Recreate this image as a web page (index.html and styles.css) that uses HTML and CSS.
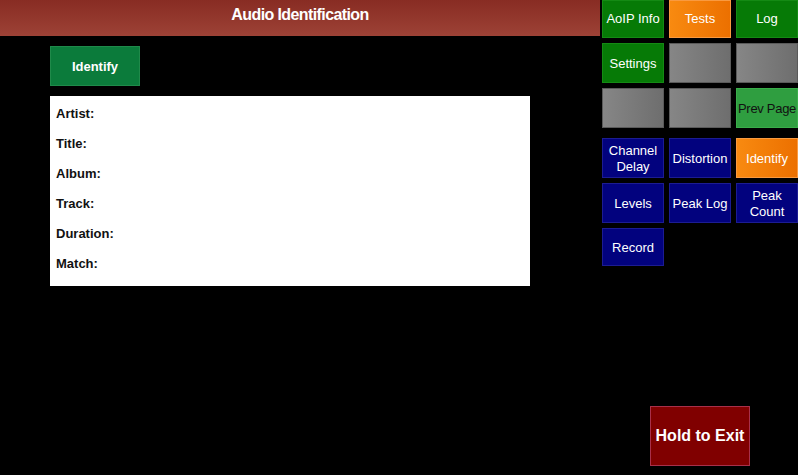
FILE: index.html
```html
<!DOCTYPE html>
<html>
<head>
<meta charset="utf-8">
<link rel="stylesheet" href="styles.css">
</head>
<body>
<div class="app">
  <div class="main">
    <div class="header">Audio Identification</div>
    <div class="identify-btn">Identify</div>
    <div class="panel">
      <div class="row">Artist:</div>
      <div class="row">Title:</div>
      <div class="row">Album:</div>
      <div class="row">Track:</div>
      <div class="row">Duration:</div>
      <div class="row">Match:</div>
    </div>
  </div>
  <div class="side">
    <div class="grid grid-top">
      <div class="btn green">AoIP Info</div>
      <div class="btn orange">Tests</div>
      <div class="btn green">Log</div>
      <div class="btn green">Settings</div>
      <div class="btn gray"></div>
      <div class="btn gray"></div>
      <div class="btn gray"></div>
      <div class="btn gray"></div>
      <div class="btn lightgreen">Prev Page</div>
    </div>
    <div class="grid grid-bottom">
      <div class="btn navy">Channel<br>Delay</div>
      <div class="btn navy">Distortion</div>
      <div class="btn orange">Identify</div>
      <div class="btn navy">Levels</div>
      <div class="btn navy">Peak Log</div>
      <div class="btn navy">Peak<br>Count</div>
      <div class="btn navy">Record</div>
    </div>
    <div class="exit">Hold to Exit</div>
  </div>
</div>
</body>
</html>
```
FILE: styles.css
```css
html, body {
  margin: 0;
  padding: 0;
  background: #000;
  font-family: "Liberation Sans", Arial, sans-serif;
}
.app {
  display: flex;
  width: 798px;
  height: 475px;
  overflow: hidden;
}
.main {
  width: 600px;
  display: flex;
  flex-direction: column;
}
.header {
  height: 36px;
  line-height: 30px;
  text-align: center;
  color: #fff;
  font-weight: bold;
  font-size: 16px;
  letter-spacing: -0.6px;
  background: linear-gradient(#882c23, #9d4236);
}
.identify-btn {
  margin: 10px 0 0 50px;
  width: 88px;
  height: 38px;
  border: 1px solid #1f8a4a;
  background: #0b7b3b;
  color: #fff;
  font-weight: bold;
  font-size: 13px;
  display: flex;
  align-items: center;
  justify-content: center;
}
.panel {
  margin: 10px 0 0 50px;
  width: 474px;
  height: 187px;
  padding: 3px 0 0 6px;
  background: #fff;
}
.row {
  height: 30px;
  line-height: 30px;
  font-weight: bold;
  font-size: 13px;
  color: #111;
}
.side {
  width: 196px;
  padding-left: 2px;
  display: flex;
  flex-direction: column;
}
.grid {
  display: grid;
  grid-template-columns: 62px 62px 62px;
  column-gap: 5px;
  row-gap: 5px;
}
.grid-top {
  grid-template-rows: 38px 40px 40px;
}
.grid-bottom {
  margin-top: 10px;
  grid-template-rows: 40px 40px 38px;
}
.btn {
  box-sizing: border-box;
  display: flex;
  align-items: center;
  justify-content: center;
  text-align: center;
  font-size: 13px;
  line-height: 16px;
  padding-top: 2px;
  color: #fff;
  white-space: nowrap;
}
.grid-top .btn:nth-child(-n+3) {
  padding-top: 0;
}
.green {
  background: #067a06;
  border: 1px solid #148a14;
}
.orange {
  background: linear-gradient(90deg, #f88a10, #ec7000);
  border: 1px solid #f99a40;
}
.gray {
  background: linear-gradient(90deg, #868686, #6e6e6e);
  border: 1px solid #5a5a5a;
}
.lightgreen {
  background: #2f9e40;
  border: 1px solid #3aad4a;
  color: #111;
  overflow: hidden;
  letter-spacing: -0.3px;
}
.navy {
  background: #02027e;
  border: 1px solid #1c1c92;
}
.exit {
  margin: auto 0 9px 48px;
  width: 100px;
  height: 60px;
  box-sizing: border-box;
  background: #800000;
  border: 1px solid #a8304a;
  color: #fff;
  font-weight: bold;
  font-size: 16px;
  display: flex;
  align-items: center;
  justify-content: center;
}
```
